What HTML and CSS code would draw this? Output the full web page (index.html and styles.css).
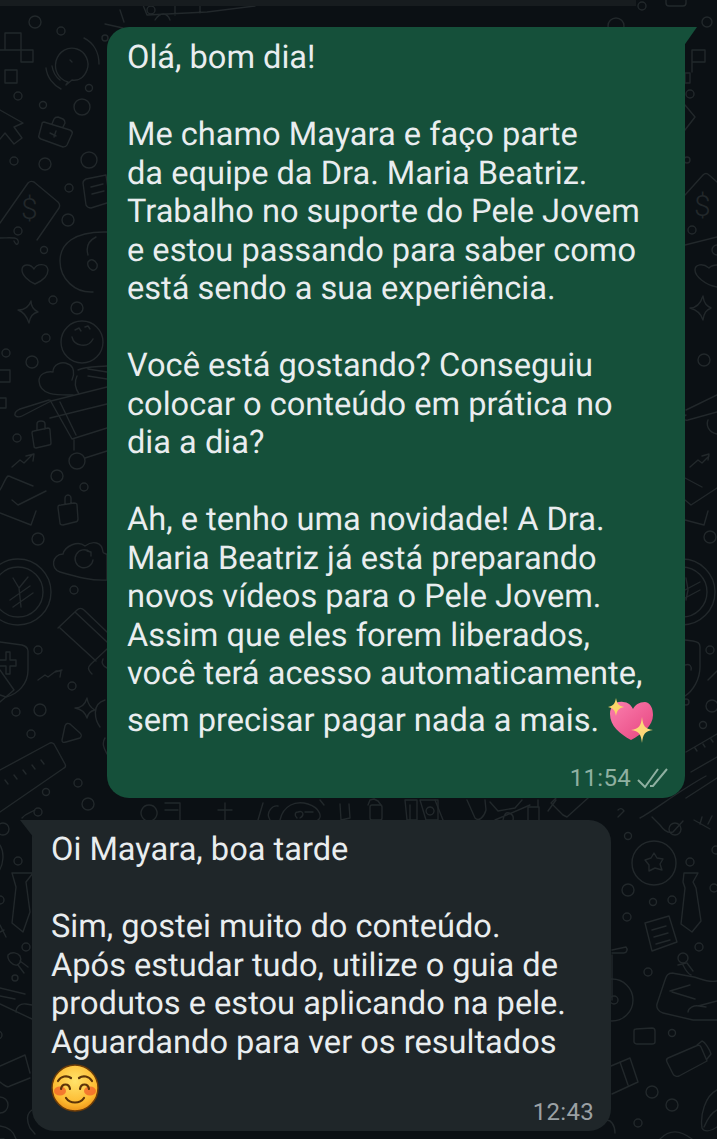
FILE: index.html
```html
<!DOCTYPE html>
<html lang="pt-BR">
<head>
  <meta charset="UTF-8" />
  <meta name="viewport" content="width=device-width, initial-scale=1.0" />
  <title>Conversa</title>
  <link rel="stylesheet" href="styles.css">
</head>
<body>
  <div class="screen">
    <!-- wallpaper doodles -->
    <svg class="doodles" width="717" height="1139" viewBox="0 0 717 1139" fill="none" aria-hidden="true">
      <g>
        <circle cx="35" cy="22" r="6"/><circle cx="61" cy="31" r="4"/><circle cx="151" cy="10" r="4"/><circle cx="105" cy="38" r="3"/>
        <circle cx="18" cy="96" r="4"/><circle cx="43" cy="105" r="3.5"/><circle cx="82" cy="107" r="8"/><circle cx="89" cy="88" r="3.5"/>
        <circle cx="14" cy="161" r="4"/><circle cx="45" cy="164" r="6"/><circle cx="89" cy="160" r="8"/><circle cx="69" cy="188" r="4"/>
        <circle cx="68" cy="220" r="6"/><circle cx="18" cy="231" r="4"/><circle cx="44" cy="250" r="3.5"/><circle cx="53" cy="300" r="4"/>
        <circle cx="77" cy="308" r="6"/><circle cx="46" cy="338" r="4"/><circle cx="6" cy="353" r="4"/><circle cx="32" cy="362" r="6"/>
        <circle cx="57" cy="476" r="6"/><circle cx="84" cy="487" r="4"/><circle cx="17" cy="438" r="4"/>
        <circle cx="38" cy="539" r="6"/><circle cx="74" cy="590" r="4"/><circle cx="38" cy="650" r="4"/><circle cx="72" cy="686" r="4"/>
        <circle cx="16" cy="712" r="4"/><circle cx="40" cy="710" r="6"/><circle cx="31" cy="734" r="4"/><circle cx="78" cy="783" r="4"/>
        <circle cx="88" cy="804" r="6"/><circle cx="46" cy="792" r="3.5"/><circle cx="38" cy="812" r="4"/><circle cx="3" cy="829" r="6"/>

        <path d="M5 33h16v17h12v12H21v-12H5zM0 50h5M5 70h12v13H5z"/>
        <path d="M68 82c-10-3-14-12-12-21 3-10 12-15 21-12 9 3 13 13 10 21-3 8-9 11-15 10l-6 5z"/><path d="M70 60l2 2M84 38c10 5 15 15 15 26M46 68c1 9 7 17 15 21M52 66c1 6 4 11 8 14"/>
        <path d="M0 110l23 13-9 4 8 11-8 6-9-11-5 6"/>
        <path d="M44 122l26 8c2 1 3 2 2 4l-5 11c-1 2-2 2-4 2l-22-8c-2-1-3-2-2-4l3-11c0-2 1-2 2-2zM52 124l2-5c1-2 2-2 4-2l5 2c2 1 2 2 2 4l-2 4M50 133l6 3M56 131l-2 6"/>
        <path d="M86 179l20-4 4 27-19 6c-3 0-4-1-5-3l-3-22c0-2 1-3 3-4zM91 187l12-3M92 194l12-3"/>
        <path d="M0 223l28-40c2-2 4-2 6-1l24 20c2 2 2 4 1 6l-22 32"/>
        <text x="21" y="219" class="sign">$</text>
        <path d="M0 238c8 0 14-1 17 1 3 3 0 9-3 2"/>
        <path d="M35 284c-7-3-13-9-13-14 0-6 8-7 12-1 3-6 13-6 14 1 0 6-6 11-13 14z"/>
        <path d="M18 310c6 0 11-3 13-9 0 6 3 9 7 11-5 1-8 4-9 11-2-6-5-11-11-13z"/>
        <path d="M93 292c-18 1-33-13-33-31 0-17 14-30 47-29"/><path d="M96 237c-8 4-10 11-8 18M88 262c3-4 7-2 9 2 1 4-2 7-5 6-3-1-5-5-4-8z"/>
        <circle cx="82" cy="342" r="21"/><path d="M72 337c2 9 16 12 21 2M75 330l4-2 2 3M85 327l3-1 2 3"/>
        <path d="M73 395c-15 0-33 1-34-14 0-7 7-10 14-9 0-8 9-11 15-8 6 2 7 10 4 16"/>
        <path d="M78 370c8-4 20-3 29-4M77 376c-3 6-2 12 2 18M88 369l19 3M88 376l19 3"/>
        <path d="M107 387l-56 14-29 15c-4 2-8 0-7-2 0-3 3-4 5-5l29-9M50 400l22 39 35-11M60 402l16 33M50 418l57-14M74 440v10"/>
        <circle cx="77" cy="461" r="8"/><path d="M85 458l22-7"/>
        <path d="M0 370h10v12H0M0 398h6v10H0"/>
        <path d="M34 431l14-3c1 0 2 1 2 2l1 13c0 1-1 2-2 2l-13 3c-1 0-2-1-2-2l-2-13c0-1 1-2 2-2zM37 430v-6c0-2 2-3 4-3 3 0 4 1 4 3v5"/>
        <path d="M12 467l8-7 4 3 9-9M26 456l8-2-1 7"/>
        <path d="M0 490c3-5 6-13 8-14 1 0 2 0 3 1l22 9M12 500l6 5 28-14M0 513l31 12 5-14"/>
        <path d="M61 505l13-2c2 0 3 0 3 2l1 14c0 2-1 3-3 3l-12 3c-2 0-3-1-3-2l-2-15c0-2 0-3 3-3zM65 504v-6c0-2 2-3 3-3s3 1 3 3v5"/>
        <circle cx="18" cy="592" r="33"/><circle cx="18" cy="592" r="25"/>
        <path d="M13 578l6 10 9-11M10 600l20-14M13 607l20-14M19 588l2 19"/>
        <path d="M60 572c-10-3-8-18 3-18 2-8 15-14 22-8 8-6 17-4 18 6 0 2 4 1 4 3v25c-15 1-30-3-47-8z"/>
        <path d="M90 552a9 9 0 1 0 3 8M87 551l4 1 0 4"/>
        <path d="M58 628l19-18c2-2 5-2 7 0l23 22M60 628l36 33M75 612l32 30"/>
        <path d="M92 674c-5-5-4-7-1-10l16-15M107 668c-4-2-6-5-4-9"/>
        <path d="M0 642l22 3c3 1 6 2 6 6l0 19c0 14-10 24-22 27l-6-2"/>
        <path d="M0 660h6v-8h4v8h6v6h-6v8H6v-8H0"/>
        <path d="M38 680l7-5 3 2 8-6 5 0-1 6M55 672l7-2"/>
        <path d="M75 708c6 0 10-3 12-10 1 7 4 10 8 12-5 1-7 3-8 8-2-6-6-9-12-10z"/>
        <path d="M65 726c1-3 3-3 5-2l10 9c2 2 2 3 0 5l-14 4c-3 1-4 0-4-2z"/>
        <path d="M0 770l50-27c2-1 3 0 4 1l11 20c1 2 1 3-1 4L0 812"/>
        <path d="M5 780l3 4M14 775l3 4M23 770l3 4M32 765l3 4M41 760l3 4"/>
        <path d="M22 818c4-5 8-5 13-8"/>
        <path d="M0 670l14 20-14 12M105 700c-14 4-10 20-5 27M105 738c-4 6 0 12 2 16"/>

        <path d="M143 5l4 10 60-3 48-6-2-6M175 0v15M200 0v13"/>
        <path d="M105 24l18 4 -6 8M120 10l4 12M155 20c5-8 12-8 15 0"/>

        <path d="M149 805a8 8 0 1 0 .1 0zM165 803h15v17M178 810h-13M225 803v17M218 810h14M258 820l5-17M280 820c3-14 15-20 28-16s14 14 10 16"/>
        <path d="M270 820c-5-8 3-15 8-14M300 818c5-3 3-8-2-6-3 0-4 3-1 6M320 800l4 5M340 804l1 16 9-2 -1-14M305 812h8"/>
        <rect x="370" y="805" width="12" height="15" rx="2"/>
        <path d="M368 805l2-5 4-1 4 2 3 4"/>
        <path d="M405 800l2 20h10v-20zM410 805v15M420 800l6 20h12v-20zM430 807a4 4 0 1 0 .1 0"/>
        <path d="M435 800l8 20M467 800l8 18c4 4 9-1 11-8l-1-10M490 802l8 9 17-3 7-8M495 820l35-15M503 820c1-6 3-8 6-7 3 1 5 3 4 7"/>
        <path d="M528 807h10v-7M528 807v14h11v-14"/>
        <path d="M548 811l8-11M556 798l-5 5 12 12 4 2 42-38M612 778l-22 4"/>
        <path d="M640 818c12-6 40-28 66-42M617 780c8-4 20-8 24-10M618 810c2-2 4-2 6 1l-6 6"/>

        <path d="M666 0v3c0 2 1 3 3 3h14c2 0 3-1 3-3V0"/>
        <circle cx="642" cy="6" r="4"/><circle cx="707" cy="22" r="5"/><circle cx="616" cy="26" r="8"/>
        <path d="M692 50h13v12h-13zM692 62v10"/><path d="M685 73h5v10h-5z"/>
        <circle cx="690" cy="94" r="4"/><path d="M685 105l10 12-10 13"/><circle cx="687" cy="160" r="3"/>
        <path d="M685 195l18-20c2-2 4-2 6 0l8 7M685 245l32-8"/>
        <text x="694" y="216" class="sign">$</text>
        <circle cx="692" cy="230" r="4"/><circle cx="717" cy="250" r="5"/>
        <path d="M717 287c-12-2-22-11-22-17 0-6 8-7 14-2 2-2 5-3 8-3"/>
        <path d="M690 308c6 0 10-3 13-12 1 8 4 10 8 12-5 2-7 5-8 12-2-7-6-10-13-12z"/>
        <circle cx="704" cy="360" r="6"/><path d="M686 410l31-15M686 415c-4 2-3 6 2 5l29-8M708 420c-2 5 0 12 9 14"/>
        <path d="M690 467l8-7 4 3 7-7M702 456l7-2-1 6M685 478l17 9M685 500l6 5 26-17M685 520l19 5 4-14"/>
        <circle cx="710" cy="537" r="6"/><circle cx="682" cy="592" r="33"/><circle cx="682" cy="592" r="25"/>
        <path d="M686 578l2 12-2 10M685 590l15-8M685 598l15-8"/>
        <path d="M685 640l8 1c5 1 7 2 7 6v20c0 12-7 24-15 29"/><path d="M685 665c5-2 7 2 6 5"/>
        <circle cx="710" cy="650" r="4"/><path d="M708 680l9-9"/>
        <circle cx="686" cy="702" r="3"/><circle cx="712" cy="706" r="6"/><circle cx="703" cy="725" r="3.5"/>
        <path d="M686 752l31-18M691 772l26-15M695 748l2 3M703 744l2 3M711 739l2 3M686 798l31-20"/>

        <circle cx="654" cy="863" r="22"/><path d="M654 853l3 5 6 1-3 5 2 6-7-2-6 3 0-6-4-5 6-2z"/>
        <circle cx="628" cy="836" r="3.5"/><circle cx="675" cy="829" r="6"/><circle cx="690" cy="862" r="4"/><circle cx="628" cy="890" r="6"/>
        <circle cx="653" cy="902" r="3.5"/><circle cx="672" cy="900" r="4"/><circle cx="627" cy="917" r="4"/><circle cx="699" cy="947" r="4"/><circle cx="648" cy="972" r="4"/>
        <circle cx="716" cy="850" r="4"/><circle cx="714" cy="888" r="4"/>
        <path d="M660 825l-8-8M660 825c5 7 10 8 13 7l10-11M700 824l2-7M694 820l16 9M712 816l-4 8"/>
        <path d="M684 873h14l-5 9 3 6 5 33-9 11-11-8 4-36-2-6z"/>
        <path d="M645 923l24-7 8 26-25 9zM652 930l14-4M654 937l14-4M656 944l14-4"/>
        <path d="M672 973l22 4c5 1 14 6 23 4M672 973c-4 0-6 3-7 7l-8 24c-1 4 2 8 6 9l30 7h24M690 985l-20 6M672 992l23 7M688 1012c0-4 6-7 11-6l7 1M698 1006l19-5"/>
        <circle cx="683" cy="958" r="5"/><path d="M683 965c2 4 5 9 8 10M687 963l6 8M678 965l8-2"/>
        <circle cx="612" cy="1000" r="21"/><circle cx="614" cy="1000" r="4"/><path d="M612 950l14-3c2 2 1 6-2 6l-12 0M612 955v45"/>
        <path d="M636 1029l16-1c2 0 3 1 3 3v11c0 1-1 2-3 2h-15c-1 0-3-1-3-2v-11c0-1 1-2 2-2z"/><circle cx="672" cy="1033" r="3.5"/>
        <path d="M668 1058l28-12c2-1 4-1 5 1l6 14-28 15c-2 1-5 0-6-2l-6-12c-1-2-1-3 1-4zM697 1045l5-4c3 1 8 9 9 13l-4 5"/>
        <path d="M611 1066l19-8 8 24-26 12M620 1062l8 23"/>
        <circle cx="652" cy="1092" r="6"/><circle cx="672" cy="1105" r="6"/><circle cx="638" cy="1123" r="4"/>
        <path d="M717 1090c-12 6-17 25-15 38 2 4 8 4 15-1M717 1110c-6 3-10 10-13 17"/>
        <path d="M605 1121c6-3 10 5 10 12M660 1139c10-10 20-9 32 0"/>

        <path d="M12 873h21l-7 9 4 30-7 20-11-9 4-36z"/>
        <circle cx="18" cy="861" r="4"/><circle cx="0" cy="900" r="4"/><circle cx="26" cy="947" r="4"/><circle cx="15" cy="978" r="3"/>
        <path d="M0 845c5 8 3 20-1 26M0 932l4-2M0 925l6 12"/>
        <path d="M8 955c4-4 10-2 12 1 2 4 0 8-3 9-4 1-10-5-9-10zM18 965l6 8M20 961l8 6"/>
        <path d="M0 988l25 6M0 996l15 3M16 1012c0-5 4-9 10-8l6 1M0 1004l32 15"/>
        <path d="M0 1066l25-11 5 18M0 1082c5 4 8 6 10 4l20-8"/>
        <circle cx="-2" cy="1035" r="4"/><circle cx="0" cy="1105" r="8"/>
        <path d="M0 1126c8 1 14 6 16 13M32 1110c-5 3-6 10-2 18l5 6M0 1139h4"/>
      </g>
    </svg>

    <div class="chat">
      <div class="prev-bubble"></div>

      <div class="bubble bubble-out">
        <p class="bubble-text">Olá, bom dia!</p>
        <p class="bubble-text">Me chamo Mayara e faço parte<br>da equipe da Dra. Maria Beatriz.<br>Trabalho no suporte do Pele Jovem<br>e estou passando para saber como<br>está sendo a sua experiência.</p>
        <p class="bubble-text">Você está gostando? Conseguiu<br>colocar o conteúdo em prática no<br>dia a dia?</p>
        <p class="bubble-text last">Ah, e tenho uma novidade! A Dra.<br>Maria Beatriz já está preparando<br>novos vídeos para o Pele Jovem.<br>Assim que eles forem liberados,<br>você terá acesso automaticamente,<br>sem precisar pagar nada a mais.
          <svg class="emoji-heart" width="48" height="48" viewBox="0 -5 48 48" aria-label="coração brilhante">
            <defs>
              <linearGradient id="heartFill" x1="0" y1="0" x2="1" y2="1">
                <stop offset="0" stop-color="#fb7fae"/>
                <stop offset="1" stop-color="#e6447f"/>
              </linearGradient>
            </defs>
            <path d="M24 42C13 36 3 28 3 16 3 8 9 3 16 4c5 0 8 3 10 7 2-4 6-7 12-7 6 1 8 7 8 13 0 11-11 19-22 25z" fill="url(#heartFill)"/>
            <path d="M9 0c1 6 3 8 8 9-5 1-7 3-8 9-1-6-3-8-8-9 5-1 7-3 8-9z" fill="#fbd768"/>
            <path d="M35 19c1 9 3 12 11 13-8 1-10 4-11 13-1-9-3-12-11-13 8-1 10-4 11-13z" fill="#fcd878"/>
          </svg>
        </p>
        <div class="bubble-meta">
          <span class="time">11:54</span>
          <svg class="ticks" width="32" height="22" viewBox="0 0 32 22" fill="none">
            <path d="M1 13l7 7L21 2M13 19h3L30 2"/>
          </svg>
        </div>
      </div>

      <div class="bubble bubble-in">
        <p class="bubble-text">Oi Mayara, boa tarde</p>
        <p class="bubble-text last">Sim, gostei muito do conteúdo.<br>Após estudar tudo, utilize o guia de<br>produtos e estou aplicando na pele.<br>Aguardando para ver os resultados</p>
        <div class="bubble-foot">
          <svg class="emoji-smile" width="48" height="48" viewBox="0 0 48 48" aria-label="rosto sorridente">
            <defs>
              <radialGradient id="faceFill" cx="0.5" cy="0.35" r="0.7">
                <stop offset="0" stop-color="#ffe36b"/>
                <stop offset="0.7" stop-color="#fdb92f"/>
                <stop offset="1" stop-color="#e88a14"/>
              </radialGradient>
            </defs>
            <circle cx="24" cy="24" r="23" fill="url(#faceFill)" stroke="#6e3d08" stroke-width="1.5"/>
            <ellipse cx="9" cy="27" rx="6" ry="4.5" fill="#f0602a" opacity="0.75"/>
            <ellipse cx="39" cy="27" rx="6" ry="4.5" fill="#f0602a" opacity="0.75"/>
            <path d="M7 17c3-5 9-6 13-3M28 14c4-3 10-2 13 3M10 25c1-6 8-6 9 0M29 25c1-6 8-6 9 0M15 34c4 6 14 6 18 0" fill="none" stroke="#5c3409" stroke-width="2.2" stroke-linecap="round"/>
          </svg>
          <span class="time">12:43</span>
        </div>
      </div>
    </div>
  </div>
</body>
</html>
```

FILE: styles.css
```css
html, body {
  margin: 0;
  padding: 0;
}
body {
  background-color: #0b1014;
  font-family: 'Roboto', sans-serif;
  color: #e9edef;
}
.screen {
  position: relative;
  width: 717px;
  height: 1139px;
  overflow: hidden;
  background-color: #0b1014;
}
.doodles {
  position: absolute;
  top: 0;
  left: 0;
}
.doodles g {
  stroke: #22282b;
  stroke-width: 1.4;
  stroke-linecap: round;
  stroke-linejoin: round;
}
.doodles .sign {
  fill: #22282b;
  stroke: none;
  font-family: 'Roboto', sans-serif;
  font-size: 30px;
  font-weight: 300;
}
.chat {
  position: relative;
  display: flex;
  flex-direction: column;
}
.prev-bubble {
  width: 636px;
  height: 6px;
  margin-bottom: 21px;
  background-color: #171c1f;
}
.bubble {
  position: relative;
  box-sizing: border-box;
}
.bubble-out {
  width: 578px;
  height: 771px;
  margin-left: 107px;
  padding: 11px 20px 0;
  background-color: #15503a;
  border-radius: 22px 0 22px 22px;
}
.bubble-out::after {
  content: "";
  position: absolute;
  top: 0;
  right: -12px;
  width: 14px;
  height: 20px;
  background-color: #15503a;
  clip-path: polygon(0 0, 100% 0, 0 100%);
}
.bubble-in {
  width: 579px;
  height: 311px;
  margin-top: 22px;
  margin-left: 32px;
  padding: 10px 19px 0;
  background-color: #1f2629;
  border-radius: 0 22px 22px 22px;
}
.bubble-in::before {
  content: "";
  position: absolute;
  top: 0;
  left: -12px;
  width: 14px;
  height: 18px;
  background-color: #1f2629;
  clip-path: polygon(0 0, 100% 0, 100% 100%);
}
.bubble-text {
  margin: 0 0 38.5px;
  font-size: 32.6px;
  line-height: 38.5px;
  white-space: nowrap;
  text-rendering: geometricPrecision;
}
.bubble-text.last {
  margin-bottom: 0;
}
.emoji-heart {
  vertical-align: -10px;
  overflow: visible;
}
.bubble-meta {
  display: flex;
  justify-content: flex-end;
  align-items: center;
  gap: 6px;
  margin-top: 23px;
  margin-right: -4px;
}
.time {
  font-size: 24px;
  line-height: 28px;
  letter-spacing: 0.3px;
}
.bubble-out .time {
  color: #8fb0a1;
}
.bubble-in .time {
  color: #9ba1a4;
}
.ticks path {
  stroke: #8fb0a1;
  stroke-width: 2;
}
.bubble-foot {
  display: flex;
  justify-content: space-between;
  align-items: flex-start;
  margin-top: 3px;
}
.bubble-foot .time {
  margin-top: 34px;
  margin-right: -2px;
}
```
